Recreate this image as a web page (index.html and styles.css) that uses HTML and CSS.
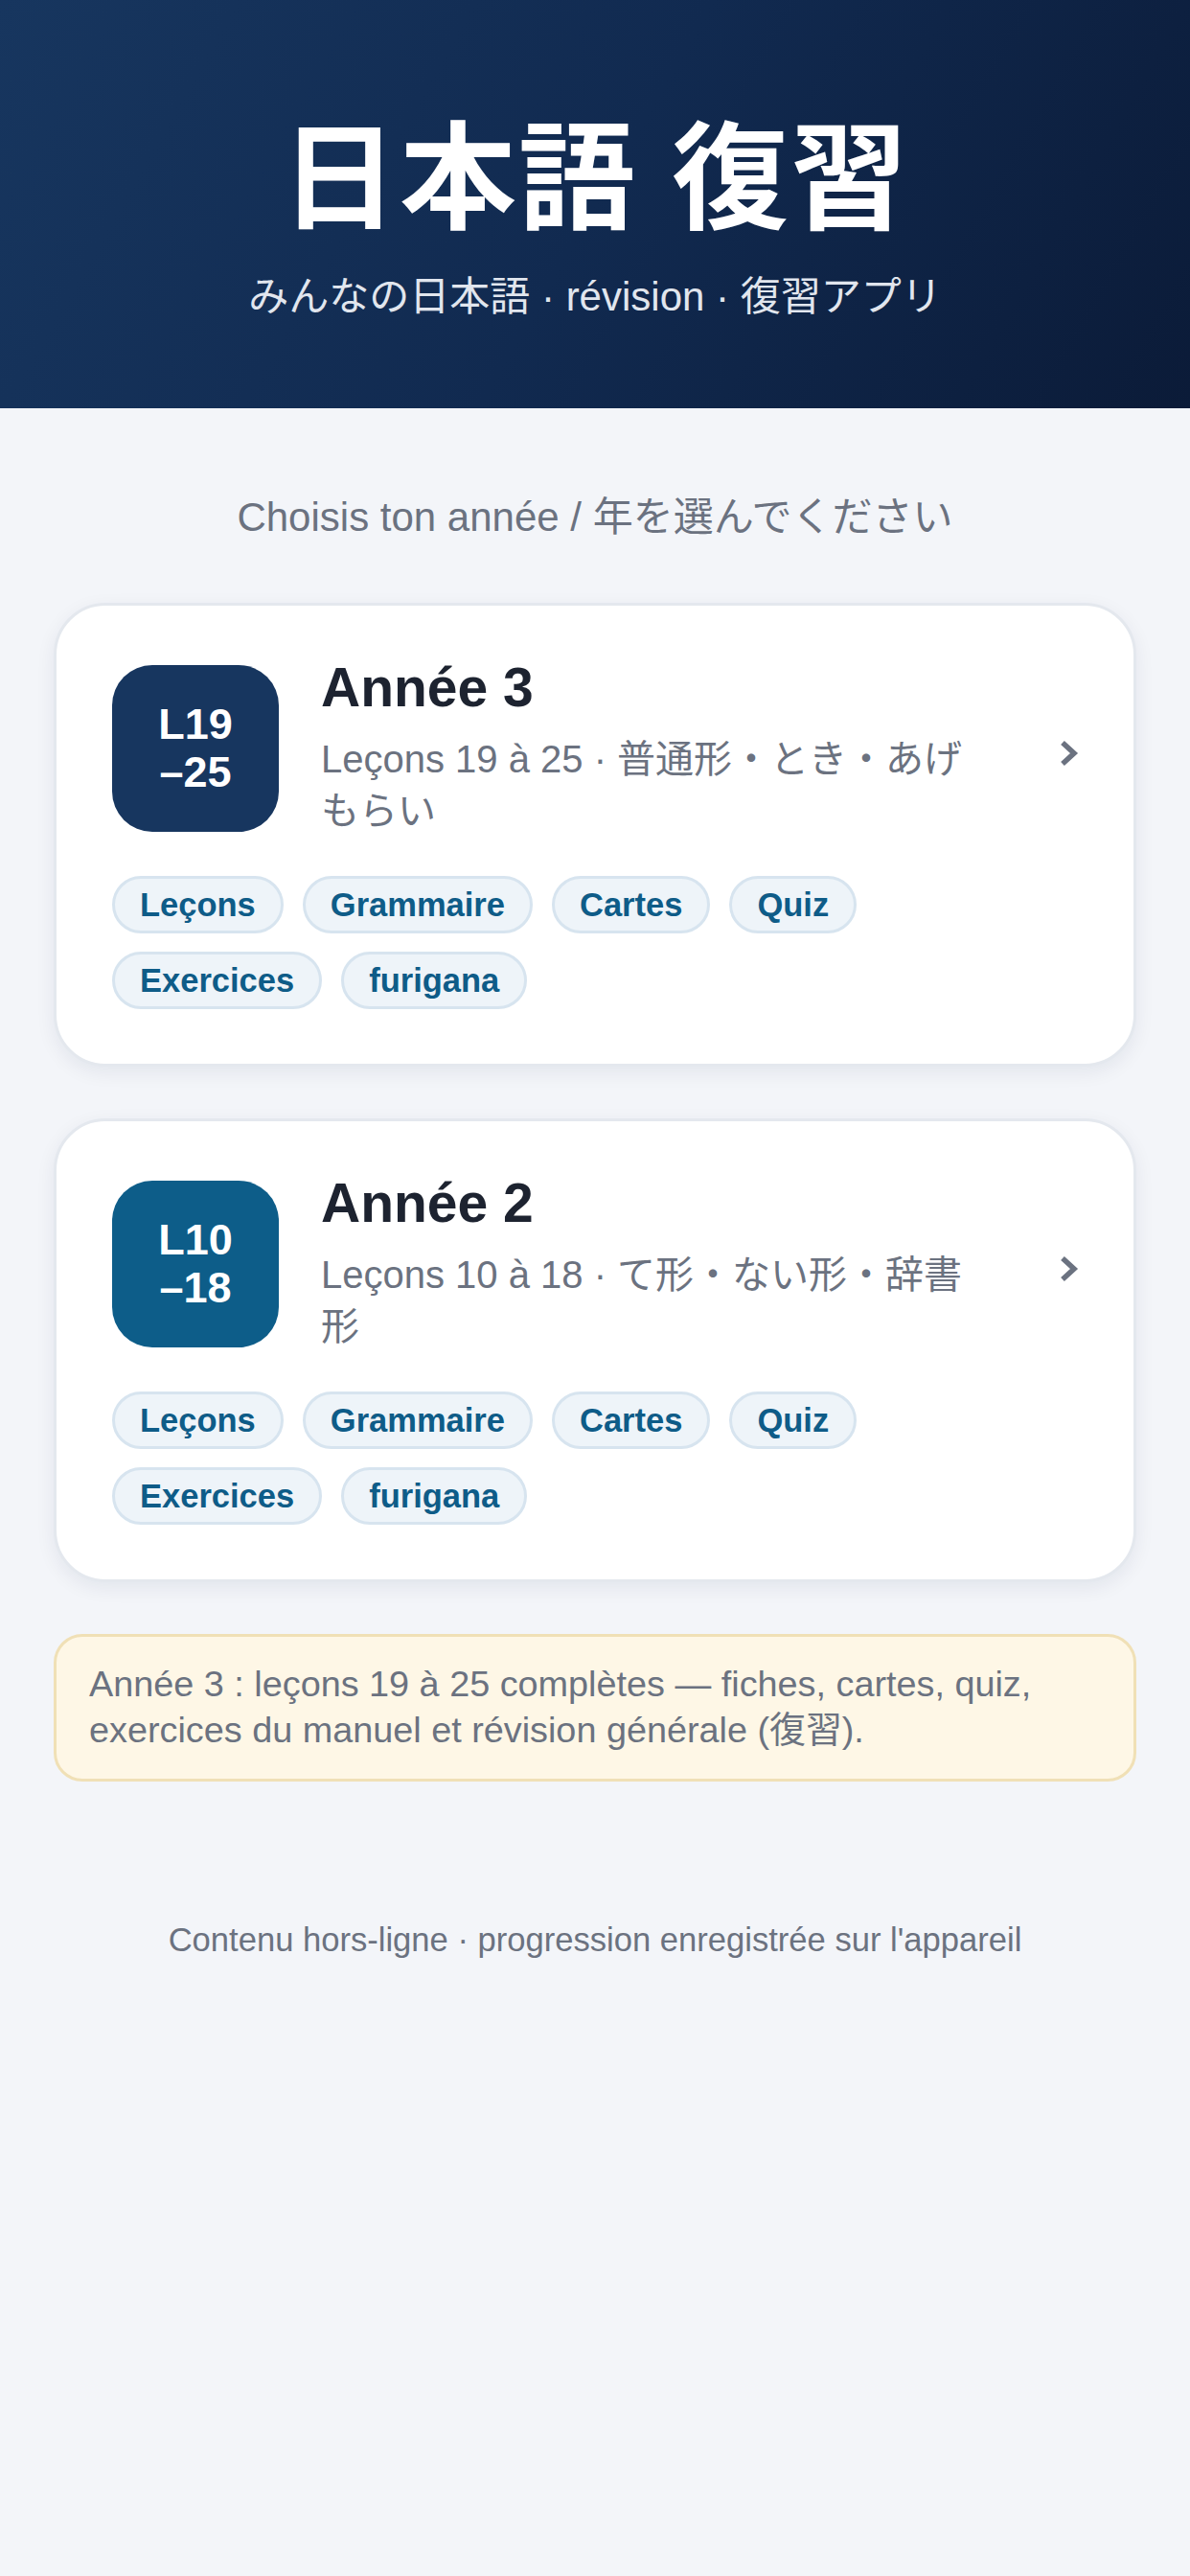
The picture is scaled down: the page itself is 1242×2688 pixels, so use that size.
FILE: index.html
```html
<!DOCTYPE html>
<html lang="fr">
<head>
<meta charset="utf-8">
<title>日本語 復習</title>
<link rel="stylesheet" href="styles.css">
</head>
<body>
<header class="hero">
  <h1 class="hero-title">日本語 復習</h1>
  <p class="hero-sub">みんなの日本語 · révision · 復習アプリ</p>
</header>
<main class="content">
  <p class="prompt">Choisis ton année / 年を選んでください</p>

  <a class="year-card" href="#">
    <div class="card-row">
      <div class="badge badge-navy">L19<br>–25</div>
      <div class="card-text">
        <h2 class="card-title">Année 3</h2>
        <p class="card-desc">Leçons 19 à 25 · 普通形・とき・あげもらい</p>
      </div>
      <svg class="chevron" viewBox="0 0 20 30" width="20" height="30"><path d="M3 4 L15 15 L3 26" fill="none" stroke="#6b7280" stroke-width="5.5"/></svg>
    </div>
    <div class="tags">
      <span class="tag">Leçons</span>
      <span class="tag">Grammaire</span>
      <span class="tag">Cartes</span>
      <span class="tag">Quiz</span>
      <span class="tag">Exercices</span>
      <span class="tag">furigana</span>
    </div>
  </a>

  <a class="year-card" href="#">
    <div class="card-row">
      <div class="badge badge-teal">L10<br>–18</div>
      <div class="card-text">
        <h2 class="card-title">Année 2</h2>
        <p class="card-desc">Leçons 10 à 18 · て形・ない形・辞書形</p>
      </div>
      <svg class="chevron" viewBox="0 0 20 30" width="20" height="30"><path d="M3 4 L15 15 L3 26" fill="none" stroke="#6b7280" stroke-width="5.5"/></svg>
    </div>
    <div class="tags">
      <span class="tag">Leçons</span>
      <span class="tag">Grammaire</span>
      <span class="tag">Cartes</span>
      <span class="tag">Quiz</span>
      <span class="tag">Exercices</span>
      <span class="tag">furigana</span>
    </div>
  </a>

  <div class="note">Année 3 : leçons 19 à 25 complètes — fiches, cartes, quiz, exercices du manuel et révision générale (復習).</div>

  <p class="footer">Contenu hors-ligne · progression enregistrée sur l'appareil</p>
</main>
</body>
</html>
```

FILE: styles.css
```css
* { box-sizing: border-box; }

html, body {
  margin: 0;
  padding: 0;
}

body {
  background: #f3f5f9;
  font-family: "Liberation Sans", "Noto Sans CJK JP", sans-serif;
  font-size: 42px;
  color: #1f2430;
  min-height: 2688px;
}

.hero {
  height: 426px;
  background: linear-gradient(120deg, #17365f 0%, #112a50 50%, #0b1b38 100%);
  display: flex;
  flex-direction: column;
  align-items: center;
  padding-top: 112px;
}

.hero-title {
  margin: 0;
  font-family: "Liberation Sans", "Noto Sans CJK JP", sans-serif;
  font-weight: 700;
  font-size: 122px;
  line-height: 150px;
  letter-spacing: 2px;
  color: #ffffff;
}

.hero-sub {
  margin: 23px 0 0;
  font-size: 42px;
  line-height: 50px;
  color: #e1e6ee;
}

.content {
  padding: 0 56px;
}

.prompt {
  margin: 89px 0 64px;
  text-align: center;
  font-size: 42px;
  line-height: 50px;
  color: #6b7280;
}

.year-card {
  display: block;
  text-decoration: none;
  color: inherit;
  background: #ffffff;
  border: 3px solid #e4e8ee;
  border-radius: 54px;
  padding: 57px 57px 57px 58px;
  margin-bottom: 54px;
  box-shadow: 0 6px 20px rgba(20, 35, 70, 0.07);
}

.card-row {
  display: flex;
  align-items: center;
  gap: 44px;
}

.badge {
  flex: none;
  width: 174px;
  height: 174px;
  border-radius: 42px;
  display: flex;
  align-items: center;
  justify-content: center;
  text-align: center;
  color: #ffffff;
  font-weight: 700;
  font-size: 45px;
  line-height: 50px;
}

.badge-navy { background: #17365f; }
.badge-teal { background: #0d5d89; }

.card-text {
  flex: 1;
  min-width: 0;
}

.card-title {
  margin: 0 0 19px;
  font-size: 57px;
  line-height: 57px;
  font-weight: 700;
  color: #1d2330;
}

.card-desc {
  margin: 0;
  font-size: 40px;
  line-height: 54px;
  color: #6b7280;
}

.chevron {
  flex: none;
  margin-left: 26px;
  margin-top: 10px;
}

.tags {
  display: flex;
  flex-wrap: wrap;
  gap: 19px 20px;
  margin-top: 41px;
}

.tag {
  display: inline-block;
  padding: 7px 26px;
  border: 3px solid #d7e4ef;
  border-radius: 40px;
  background: #eef4f9;
  color: #0e5c88;
  font-weight: 700;
  font-size: 34.5px;
  line-height: 40px;
}

.note {
  margin-top: 52px;
  padding: 25px 34px 27px;
  background: #fef7e6;
  border: 3px solid #f0e0b6;
  border-radius: 30px;
  font-size: 37.8px;
  line-height: 48px;
  color: #6b7280;
}

.footer {
  margin: 142px 0 0;
  text-align: center;
  font-size: 34.6px;
  line-height: 47px;
  color: #6b7280;
}
```
